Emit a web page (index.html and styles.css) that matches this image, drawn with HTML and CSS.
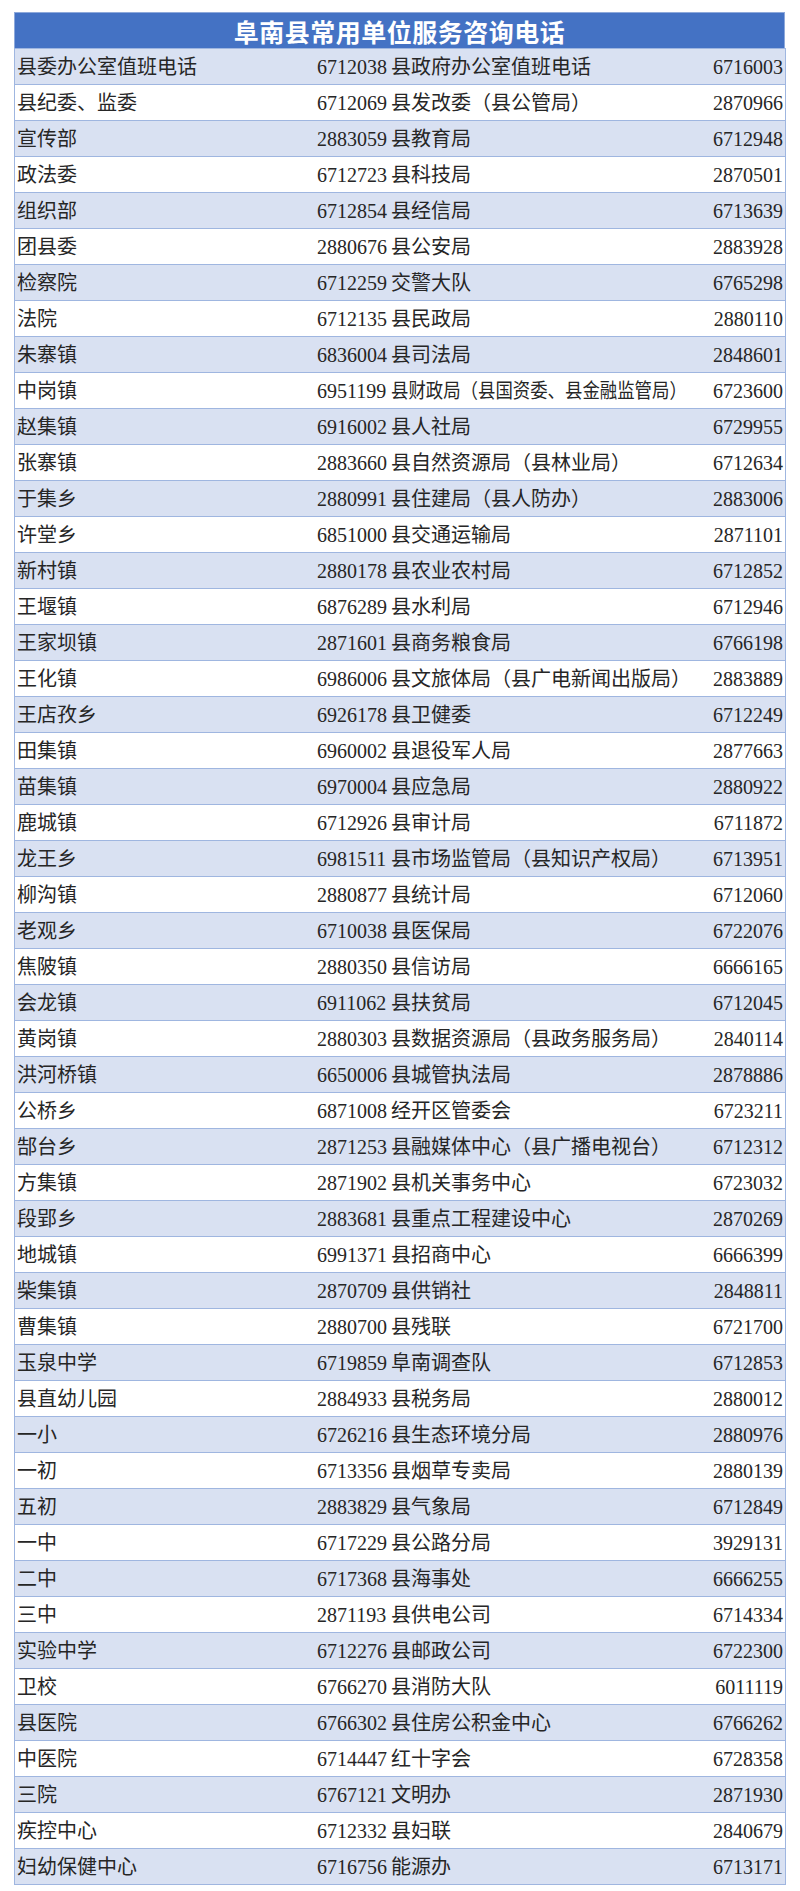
FILE: index.html
```html
<!DOCTYPE html>
<html lang="zh">
<head>
<meta charset="utf-8">
<title>阜南县常用单位服务咨询电话</title>
<link rel="stylesheet" href="styles.css">
</head>
<body>
<div class="sheet">
  <div class="title">阜南县常用单位服务咨询电话</div>
  <div class="rows">
    <div class="row"><span class="c1">县委办公室值班电话</span><span class="c2">6712038</span><span class="c3">县政府办公室值班电话</span><span class="c4">6716003</span></div>
    <div class="row"><span class="c1">县纪委、监委</span><span class="c2">6712069</span><span class="c3">县发改委（县公管局）</span><span class="c4">2870966</span></div>
    <div class="row"><span class="c1">宣传部</span><span class="c2">2883059</span><span class="c3">县教育局</span><span class="c4">6712948</span></div>
    <div class="row"><span class="c1">政法委</span><span class="c2">6712723</span><span class="c3">县科技局</span><span class="c4">2870501</span></div>
    <div class="row"><span class="c1">组织部</span><span class="c2">6712854</span><span class="c3">县经信局</span><span class="c4">6713639</span></div>
    <div class="row"><span class="c1">团县委</span><span class="c2">2880676</span><span class="c3">县公安局</span><span class="c4">2883928</span></div>
    <div class="row"><span class="c1">检察院</span><span class="c2">6712259</span><span class="c3">交警大队</span><span class="c4">6765298</span></div>
    <div class="row"><span class="c1">法院</span><span class="c2">6712135</span><span class="c3">县民政局</span><span class="c4">2880110</span></div>
    <div class="row"><span class="c1">朱寨镇</span><span class="c2">6836004</span><span class="c3">县司法局</span><span class="c4">2848601</span></div>
    <div class="row"><span class="c1">中岗镇</span><span class="c2">6951199</span><span class="c3"><span class="squeeze">县财政局（县国资委、县金融监管局）</span></span><span class="c4">6723600</span></div>
    <div class="row"><span class="c1">赵集镇</span><span class="c2">6916002</span><span class="c3">县人社局</span><span class="c4">6729955</span></div>
    <div class="row"><span class="c1">张寨镇</span><span class="c2">2883660</span><span class="c3">县自然资源局（县林业局）</span><span class="c4">6712634</span></div>
    <div class="row"><span class="c1">于集乡</span><span class="c2">2880991</span><span class="c3">县住建局（县人防办）</span><span class="c4">2883006</span></div>
    <div class="row"><span class="c1">许堂乡</span><span class="c2">6851000</span><span class="c3">县交通运输局</span><span class="c4">2871101</span></div>
    <div class="row"><span class="c1">新村镇</span><span class="c2">2880178</span><span class="c3">县农业农村局</span><span class="c4">6712852</span></div>
    <div class="row"><span class="c1">王堰镇</span><span class="c2">6876289</span><span class="c3">县水利局</span><span class="c4">6712946</span></div>
    <div class="row"><span class="c1">王家坝镇</span><span class="c2">2871601</span><span class="c3">县商务粮食局</span><span class="c4">6766198</span></div>
    <div class="row"><span class="c1">王化镇</span><span class="c2">6986006</span><span class="c3">县文旅体局（县广电新闻出版局）</span><span class="c4">2883889</span></div>
    <div class="row"><span class="c1">王店孜乡</span><span class="c2">6926178</span><span class="c3">县卫健委</span><span class="c4">6712249</span></div>
    <div class="row"><span class="c1">田集镇</span><span class="c2">6960002</span><span class="c3">县退役军人局</span><span class="c4">2877663</span></div>
    <div class="row"><span class="c1">苗集镇</span><span class="c2">6970004</span><span class="c3">县应急局</span><span class="c4">2880922</span></div>
    <div class="row"><span class="c1">鹿城镇</span><span class="c2">6712926</span><span class="c3">县审计局</span><span class="c4">6711872</span></div>
    <div class="row"><span class="c1">龙王乡</span><span class="c2">6981511</span><span class="c3">县市场监管局（县知识产权局）</span><span class="c4">6713951</span></div>
    <div class="row"><span class="c1">柳沟镇</span><span class="c2">2880877</span><span class="c3">县统计局</span><span class="c4">6712060</span></div>
    <div class="row"><span class="c1">老观乡</span><span class="c2">6710038</span><span class="c3">县医保局</span><span class="c4">6722076</span></div>
    <div class="row"><span class="c1">焦陂镇</span><span class="c2">2880350</span><span class="c3">县信访局</span><span class="c4">6666165</span></div>
    <div class="row"><span class="c1">会龙镇</span><span class="c2">6911062</span><span class="c3">县扶贫局</span><span class="c4">6712045</span></div>
    <div class="row"><span class="c1">黄岗镇</span><span class="c2">2880303</span><span class="c3">县数据资源局（县政务服务局）</span><span class="c4">2840114</span></div>
    <div class="row"><span class="c1">洪河桥镇</span><span class="c2">6650006</span><span class="c3">县城管执法局</span><span class="c4">2878886</span></div>
    <div class="row"><span class="c1">公桥乡</span><span class="c2">6871008</span><span class="c3">经开区管委会</span><span class="c4">6723211</span></div>
    <div class="row"><span class="c1">郜台乡</span><span class="c2">2871253</span><span class="c3">县融媒体中心（县广播电视台）</span><span class="c4">6712312</span></div>
    <div class="row"><span class="c1">方集镇</span><span class="c2">2871902</span><span class="c3">县机关事务中心</span><span class="c4">6723032</span></div>
    <div class="row"><span class="c1">段郢乡</span><span class="c2">2883681</span><span class="c3">县重点工程建设中心</span><span class="c4">2870269</span></div>
    <div class="row"><span class="c1">地城镇</span><span class="c2">6991371</span><span class="c3">县招商中心</span><span class="c4">6666399</span></div>
    <div class="row"><span class="c1">柴集镇</span><span class="c2">2870709</span><span class="c3">县供销社</span><span class="c4">2848811</span></div>
    <div class="row"><span class="c1">曹集镇</span><span class="c2">2880700</span><span class="c3">县残联</span><span class="c4">6721700</span></div>
    <div class="row"><span class="c1">玉泉中学</span><span class="c2">6719859</span><span class="c3">阜南调查队</span><span class="c4">6712853</span></div>
    <div class="row"><span class="c1">县直幼儿园</span><span class="c2">2884933</span><span class="c3">县税务局</span><span class="c4">2880012</span></div>
    <div class="row"><span class="c1">一小</span><span class="c2">6726216</span><span class="c3">县生态环境分局</span><span class="c4">2880976</span></div>
    <div class="row"><span class="c1">一初</span><span class="c2">6713356</span><span class="c3">县烟草专卖局</span><span class="c4">2880139</span></div>
    <div class="row"><span class="c1">五初</span><span class="c2">2883829</span><span class="c3">县气象局</span><span class="c4">6712849</span></div>
    <div class="row"><span class="c1">一中</span><span class="c2">6717229</span><span class="c3">县公路分局</span><span class="c4">3929131</span></div>
    <div class="row"><span class="c1">二中</span><span class="c2">6717368</span><span class="c3">县海事处</span><span class="c4">6666255</span></div>
    <div class="row"><span class="c1">三中</span><span class="c2">2871193</span><span class="c3">县供电公司</span><span class="c4">6714334</span></div>
    <div class="row"><span class="c1">实验中学</span><span class="c2">6712276</span><span class="c3">县邮政公司</span><span class="c4">6722300</span></div>
    <div class="row"><span class="c1">卫校</span><span class="c2">6766270</span><span class="c3">县消防大队</span><span class="c4">6011119</span></div>
    <div class="row"><span class="c1">县医院</span><span class="c2">6766302</span><span class="c3">县住房公积金中心</span><span class="c4">6766262</span></div>
    <div class="row"><span class="c1">中医院</span><span class="c2">6714447</span><span class="c3">红十字会</span><span class="c4">6728358</span></div>
    <div class="row"><span class="c1">三院</span><span class="c2">6767121</span><span class="c3">文明办</span><span class="c4">2871930</span></div>
    <div class="row"><span class="c1">疾控中心</span><span class="c2">6712332</span><span class="c3">县妇联</span><span class="c4">2840679</span></div>
    <div class="row"><span class="c1">妇幼保健中心</span><span class="c2">6716756</span><span class="c3">能源办</span><span class="c4">6713171</span></div>
  </div>
</div>
</body>
</html>
```

FILE: styles.css
```css
html, body {
  margin: 0;
  padding: 0;
  background: #ffffff;
}

body {
  font-family: "Liberation Serif", "Noto Sans CJK SC", serif;
  color: #262626;
}

.sheet {
  padding: 12px 0 0 14px;
  width: 772px;
}

.title {
  height: 36px;
  background: #4472c4;
  color: #ffffff;
  font-family: "Noto Sans CJK SC", sans-serif;
  font-weight: bold;
  font-size: 25px;
  line-height: 36px;
  text-align: center;
  letter-spacing: 0.5px;
  border: 1px solid #8ea9db;
  border-bottom: none;
  box-sizing: border-box;
  margin-right: 1px;
}

.rows {
  border-left: 1px solid #9fb6e0;
  border-right: 1px solid #9fb6e0;
}

.row {
  display: grid;
  grid-template-columns: 302px 73px minmax(0, 1fr) 80px;
  height: 35px;
  border-bottom: 1px solid #9fb6e0;
  font-size: 20px;
  line-height: 37px;
  white-space: nowrap;
}

.row:nth-child(odd) {
  background: #d9e1f2;
}

.row:first-child {
  border-top: 1px solid #9fb6e0;
}

.c1 {
  padding-left: 2px;
}

.c2 {
  padding-left: 0;
}

.c3 {
  padding-left: 1px;
}

.squeeze {
  display: inline-block;
  transform: scaleX(0.87);
  transform-origin: left center;
}

.c4 {
  text-align: right;
  padding-right: 2px;
}
```
